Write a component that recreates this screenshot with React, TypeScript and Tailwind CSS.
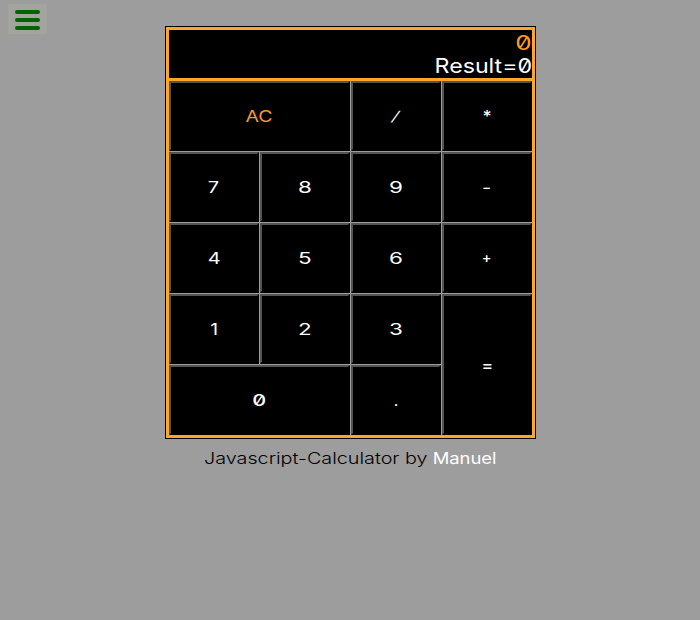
const keys = [
  { t: 'AC', area: 'col-span-2', cls: 'scale-x-[1.22] font-normal text-[#ff9a1f]' },
  { t: '/', area: '', cls: '-skew-x-[16deg] scale-x-[1.1] scale-y-[0.85] font-normal' },
  { t: '*', area: '', cls: 'scale-x-[1.1] font-medium' },
  { t: '7', area: '', cls: 'scale-x-[1.25]' },
  { t: '8', area: '', cls: 'scale-x-[1.4]' },
  { t: '9', area: '', cls: 'scale-x-[1.4]' },
  { t: '-', area: '', cls: 'scale-x-[1.25]' },
  { t: '4', area: '', cls: 'scale-x-[1.25]' },
  { t: '5', area: '', cls: 'scale-x-[1.4]' },
  { t: '6', area: '', cls: 'scale-x-[1.4]' },
  { t: '+', area: '', cls: 'scale-x-[1.05] text-[14px] font-medium' },
  { t: '1', area: '', cls: 'scale-x-[1.2]' },
  { t: '2', area: '', cls: 'scale-x-[1.4]' },
  { t: '3', area: '', cls: 'scale-x-[1.4]' },
  { t: '=', area: 'row-span-2', cls: 'scale-x-[1.1] font-medium' },
  { t: '0', area: 'col-span-2', cls: 'scale-x-[1.35] font-medium' },
  { t: '.', area: '', cls: '' },
];

export default function App() {
  return (
    <div className="relative h-[620px] w-[700px] overflow-hidden bg-[#9d9d9d] pt-[26px] font-['Inter',sans-serif] text-white [font-feature-settings:'zero']">
      <button aria-label="menu" className="absolute left-2 top-1 flex h-[30px] w-[39px] flex-col items-center gap-1 bg-[#a3a49e] pt-1.5">
        <span className="h-1 w-[25px] rounded-[2px] bg-[#006400]" />
        <span className="h-1 w-[25px] rounded-[2px] bg-[#006400]" />
        <span className="h-1 w-[25px] rounded-[2px] bg-[#006400]" />
      </button>
      <main className="ml-[165px] w-[371px] border border-black">
        <div className="border-[3px] border-[#ffa62b]">
          <div className="h-[51px] border-b-[3px] border-[#ffa62b] bg-black text-right text-[20px] leading-6">
            <div className="h-6 pt-px text-[#ff9a1f]">
              <span className="inline-block origin-right scale-x-[1.3]">0</span>
            </div>
            <div className="h-6">
              <span className="inline-block origin-right scale-x-[1.16]">Result=0</span>
            </div>
          </div>
          <div className="grid grid-cols-[repeat(4,90px)] grid-rows-[repeat(5,70px)] gap-px bg-[#9d9d9d]">
            {keys.map((k) => (
              <button
                key={k.t}
                className={`flex items-center justify-center border-2 border-b-black border-l-[#545454] border-r-black border-t-[#545454] bg-black text-[16px] leading-5 ${k.area}`}
              >
                <span className={`inline-block ${k.cls}`}>{k.t}</span>
              </button>
            ))}
          </div>
        </div>
      </main>
      <footer className="ml-[204px] mt-[7px] flex h-6 w-[293px] justify-between whitespace-nowrap text-[16px] leading-6">
        <span className="origin-left scale-x-[1.235] font-light text-black">Javascript-Calculator by</span>
        <span className="origin-right scale-x-[1.15]">Manuel</span>
      </footer>
    </div>
  );
}
